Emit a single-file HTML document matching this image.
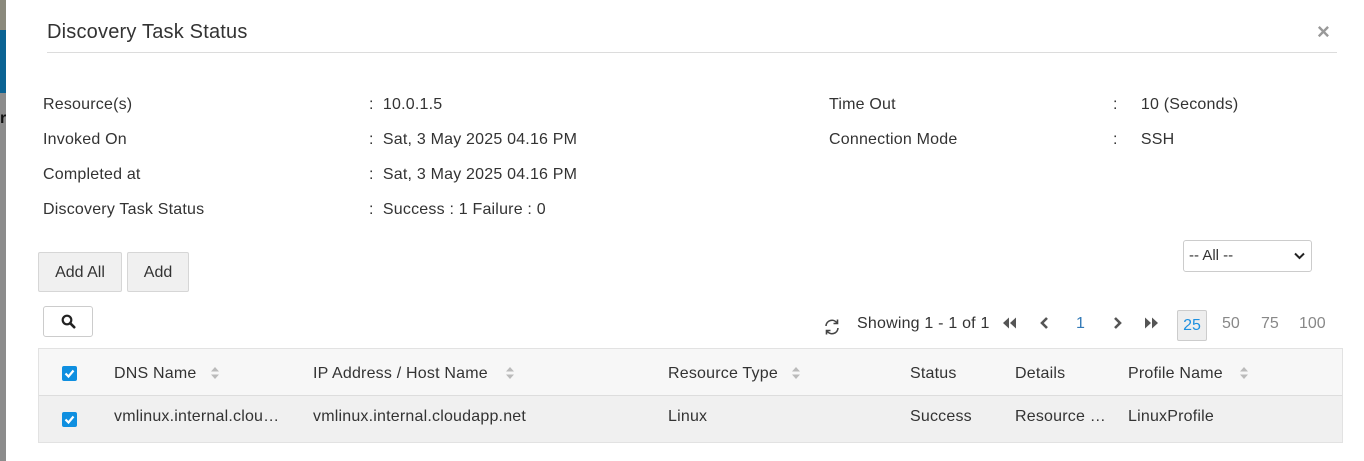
<!DOCTYPE html>
<html><head><style>
*{margin:0;padding:0;box-sizing:border-box}
body{width:1364px;height:461px;background:#fff;font-family:"Liberation Sans",Arial,sans-serif;color:#333;font-size:16px;position:relative;overflow:hidden}
.a{position:absolute;white-space:nowrap}
.t{letter-spacing:0.2px}
.btn{position:absolute;background:#f0f0f0;border:1px solid #d6d6d6;border-radius:2px;font-size:16px;color:#333;text-align:center}
.cb{position:absolute;width:15px;height:15px;background:#0f8fe0;border-radius:2px}
.sort{position:absolute;width:10px;height:16px}
</style></head><body>
<div class="a" style="left:0;top:0;width:6px;height:30px;background:#8a897c"></div>
<div class="a" style="left:0;top:30px;width:6px;height:63px;background:#0b6393"></div>
<div class="a" style="left:0;top:93px;width:6px;height:368px;background:#8c8c8c"></div>
<div class="a" style="left:0;top:110px;font-size:16px;color:#111;font-weight:bold">r</div>

<div class="a t" style="left:47px;top:21px;font-size:20px;color:#333">Discovery Task Status</div>
<div class="a" style="left:47px;top:52px;width:1290px;height:1px;background:#dcdcdc"></div>
<div class="a" style="left:1317px;top:19px;font-size:22px;color:#999;font-weight:bold">×</div>

<div class="a t" style="left:43px;top:96px">Resource(s)</div>
<div class="a t" style="left:43px;top:131px">Invoked On</div>
<div class="a t" style="left:43px;top:166px">Completed at</div>
<div class="a t" style="left:43px;top:201px">Discovery Task Status</div>
<div class="a t" style="left:369px;top:96px">:&nbsp;&nbsp;10.0.1.5</div>
<div class="a t" style="left:369px;top:131px">:&nbsp;&nbsp;Sat, 3 May 2025 04.16 PM</div>
<div class="a t" style="left:369px;top:166px">:&nbsp;&nbsp;Sat, 3 May 2025 04.16 PM</div>
<div class="a t" style="left:369px;top:201px">:&nbsp;&nbsp;Success : 1 Failure : 0</div>
<div class="a t" style="left:829px;top:96px">Time Out</div>
<div class="a t" style="left:829px;top:131px">Connection Mode</div>
<div class="a t" style="left:1113px;top:96px">:&nbsp;&nbsp;&nbsp;&nbsp;&nbsp;10 (Seconds)</div>
<div class="a t" style="left:1113px;top:131px">:&nbsp;&nbsp;&nbsp;&nbsp;&nbsp;SSH</div>

<div class="btn" style="left:38px;top:252px;width:84px;height:40px;line-height:39px">Add All</div>
<div class="btn" style="left:127px;top:252px;width:62px;height:40px;line-height:39px">Add</div>
<div class="a" style="left:1183px;top:240px;width:129px;height:32px;border:1px solid #ccc;border-radius:3px;font-size:15px;line-height:30px;padding-left:5px">-- All --
<svg style="position:absolute;right:6px;top:11px" width="11" height="8" viewBox="0 0 11 8"><path d="M1 1.5l4.5 4.5 4.5-4.5" stroke="#222" stroke-width="2" fill="none"/></svg></div>

<div class="a" style="left:43px;top:306px;width:50px;height:31px;border:1px solid #ccc;border-radius:3px">
<svg style="position:absolute;left:17px;top:7px" width="15" height="15" viewBox="0 0 15 15"><circle cx="6" cy="6" r="4.3" stroke="#222" stroke-width="2.2" fill="none"/><path d="M9.2 9.2l4 4" stroke="#222" stroke-width="2.6" stroke-linecap="round"/></svg></div>

<svg class="a" style="left:823px;top:318px" width="18" height="18" viewBox="0 0 18 18"><path d="M3 8a6 6 0 0 1 11-3M15 10a6 6 0 0 1-11 3" stroke="#444" stroke-width="1.6" fill="none"/><path d="M14.5 1.5v4h-4M3.5 16.5v-4h4" stroke="#444" stroke-width="1.6" fill="none"/></svg>
<div class="a t" style="left:857px;top:315px">Showing 1 - 1 of 1</div>
<svg class="a" style="left:1002px;top:317px" width="14" height="12" viewBox="0 0 14 12"><path d="M7 0.5L1 6l6 5.5zM14 0.5L8 6l6 5.5z" fill="#555"/></svg>
<svg class="a" style="left:1040px;top:317px" width="10" height="12" viewBox="0 0 10 12"><path d="M7 1L2 6l5 5" stroke="#555" stroke-width="2.6" fill="none"/></svg>
<div class="a" style="left:1076px;top:315px;color:#337ab7">1</div>
<svg class="a" style="left:1112px;top:317px" width="10" height="12" viewBox="0 0 10 12"><path d="M3 1l5 5-5 5" stroke="#555" stroke-width="2.6" fill="none"/></svg>
<svg class="a" style="left:1145px;top:317px" width="14" height="12" viewBox="0 0 14 12"><path d="M0 0.5L6 6l-6 5.5zM7 0.5L13 6l-6 5.5z" fill="#555"/></svg>
<div class="a" style="left:1177px;top:310px;width:30px;height:31px;background:#eee;border:1px solid #ccc;border-radius:2px;color:#1e90e0;text-align:center;line-height:29px">25</div>
<div class="a" style="left:1222px;top:315px;color:#888">50</div>
<div class="a" style="left:1261px;top:315px;color:#888">75</div>
<div class="a" style="left:1299px;top:315px;color:#888">100</div>

<div class="a" style="left:38px;top:348px;width:1305px;height:95px;border:1px solid #e2e2e2;background:#f7f7f7"></div>
<div class="a" style="left:39px;top:395px;width:1303px;height:47px;background:#f0f0f0;border-top:1px solid #ddd"></div>
<div class="cb" style="left:62px;top:366px"><svg width="15" height="15" viewBox="0 0 15 15"><path d="M3.5 7.5l3 3 5-6" stroke="#fff" stroke-width="2.2" fill="none"/></svg></div>
<div class="cb" style="left:62px;top:412px"><svg width="15" height="15" viewBox="0 0 15 15"><path d="M3.5 7.5l3 3 5-6" stroke="#fff" stroke-width="2.2" fill="none"/></svg></div>

<div class="a t" style="left:114px;top:365px">DNS Name</div>
<div class="a t" style="left:313px;top:365px">IP Address / Host Name</div>
<div class="a t" style="left:668px;top:365px">Resource Type</div>
<div class="a t" style="left:910px;top:365px">Status</div>
<div class="a t" style="left:1015px;top:365px">Details</div>
<div class="a t" style="left:1128px;top:365px">Profile Name</div>
<svg class="sort" style="left:210px;top:365px" viewBox="0 0 10 16"><path d="M1 6.5L5 2l4 4.5zM1 9.5L5 14l4-4.5z" fill="#bbb"/></svg>
<svg class="sort" style="left:505px;top:365px" viewBox="0 0 10 16"><path d="M1 6.5L5 2l4 4.5zM1 9.5L5 14l4-4.5z" fill="#bbb"/></svg>
<svg class="sort" style="left:791px;top:365px" viewBox="0 0 10 16"><path d="M1 6.5L5 2l4 4.5zM1 9.5L5 14l4-4.5z" fill="#bbb"/></svg>
<svg class="sort" style="left:1239px;top:365px" viewBox="0 0 10 16"><path d="M1 6.5L5 2l4 4.5zM1 9.5L5 14l4-4.5z" fill="#bbb"/></svg>

<div class="a t" style="left:114px;top:408px">vmlinux.internal.clou…</div>
<div class="a t" style="left:313px;top:408px">vmlinux.internal.cloudapp.net</div>
<div class="a t" style="left:668px;top:408px">Linux</div>
<div class="a t" style="left:910px;top:408px">Success</div>
<div class="a t" style="left:1015px;top:408px">Resource …</div>
<div class="a t" style="left:1128px;top:408px">LinuxProfile</div>
</body></html>
